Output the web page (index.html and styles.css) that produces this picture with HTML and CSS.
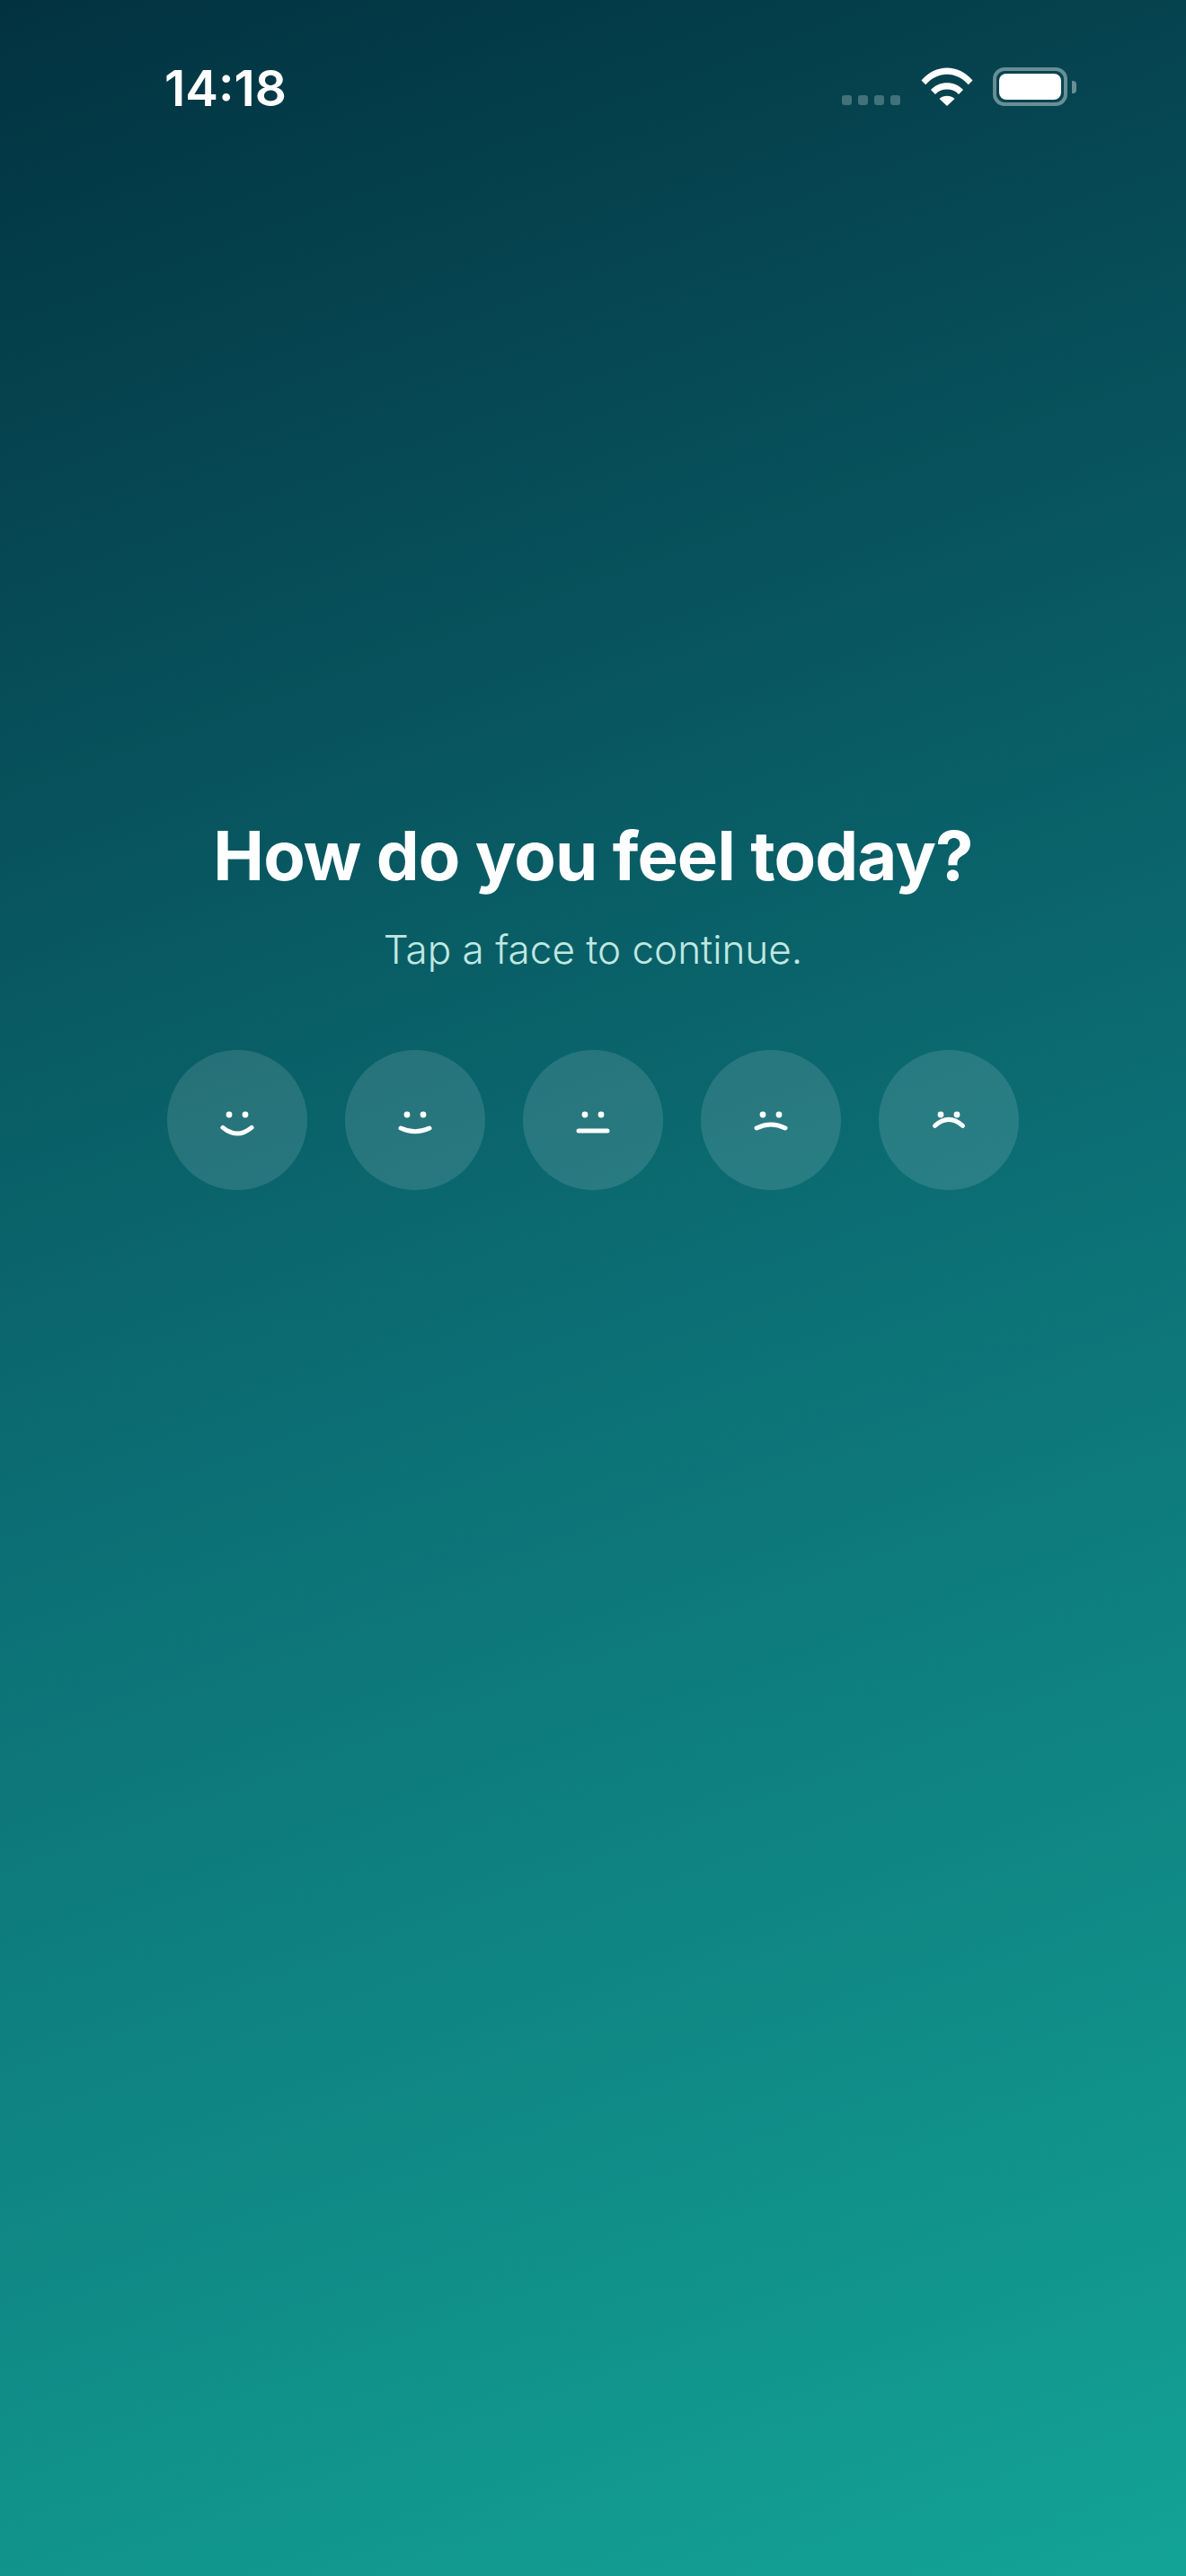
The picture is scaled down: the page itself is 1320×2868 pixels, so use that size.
FILE: index.html
```html
<!DOCTYPE html>
<html lang="en">
<head>
    <meta charset="UTF-8">
    <meta name="viewport" content="width=device-width, initial-scale=1.0">
    <title>How do you feel today?</title>
    <link rel="stylesheet" href="styles.css">
</head>
<body>
    <div class="screen">
        <!-- Status bar -->
        <header class="status-bar">
            <span class="clock">14:18</span>
            <div class="status-icons">
                <div class="signal">
                    <span class="signal-dot"></span>
                    <span class="signal-dot"></span>
                    <span class="signal-dot"></span>
                    <span class="signal-dot"></span>
                </div>
                <svg class="wifi" width="58" height="44" viewBox="0 0 58 44">
                    <path fill="#fff" d="M0.5 14.5 C16 -4.3 42 -4.3 57.5 14.5 L52.8 19.3 C39.5 3.8 18.5 3.8 5.2 19.3 Z"/>
                    <path fill="#fff" d="M11 25 C20 14.6 38 14.6 47 25 L42 30 C35.5 22.8 22.5 22.8 16 30 Z"/>
                    <path fill="#fff" d="M20.5 35 C25.5 30.6 32.5 30.6 37.5 35 L29 43 Z"/>
                </svg>
                <div class="battery">
                    <div class="battery-body"><div class="battery-level"></div></div>
                    <div class="battery-nub"></div>
                </div>
            </div>
        </header>

        <main class="prompt">
            <h1 class="prompt-title">How do you feel today?</h1>
            <p class="prompt-sub">Tap a face to continue.</p>

            <div class="faces">
                <button class="face" type="button" aria-label="Great">
                    <svg width="156" height="156" viewBox="0 0 156 156">
                        <circle class="eye" cx="69" cy="72" r="3.4"/>
                        <circle class="eye" cx="87" cy="72" r="3.4"/>
                        <path class="mouth" d="M62 86.3 Q78 99.7 94 86.3"/>
                    </svg>
                </button>
                <button class="face" type="button" aria-label="Good">
                    <svg width="156" height="156" viewBox="0 0 156 156">
                        <circle class="eye" cx="69" cy="72" r="3.4"/>
                        <circle class="eye" cx="87" cy="72" r="3.4"/>
                        <path class="mouth" d="M62 87 Q78 94.4 94 87"/>
                    </svg>
                </button>
                <button class="face" type="button" aria-label="Okay">
                    <svg width="156" height="156" viewBox="0 0 156 156">
                        <circle class="eye" cx="69" cy="72" r="3.4"/>
                        <circle class="eye" cx="87" cy="72" r="3.4"/>
                        <path class="mouth" d="M62 90 L94 90"/>
                    </svg>
                </button>
                <button class="face" type="button" aria-label="Bad">
                    <svg width="156" height="156" viewBox="0 0 156 156">
                        <circle class="eye" cx="69" cy="72" r="3.4"/>
                        <circle class="eye" cx="87" cy="72" r="3.4"/>
                        <path class="mouth" d="M62 87 Q78 79 94 87"/>
                    </svg>
                </button>
                <button class="face" type="button" aria-label="Awful">
                    <svg width="156" height="156" viewBox="0 0 156 156">
                        <circle class="eye" cx="69" cy="72" r="3.4"/>
                        <circle class="eye" cx="87" cy="72" r="3.4"/>
                        <path class="mouth" d="M62.5 84.3 Q78 70.3 93.5 84.3"/>
                    </svg>
                </button>
            </div>
        </main>
    </div>
</body>
</html>
```

FILE: styles.css
```css
* {
    box-sizing: border-box;
}

body {
    margin: 0;
    font-family: Inter, "Noto Sans", sans-serif;
}

.screen {
    height: 2868px;
    overflow: hidden;
    background: linear-gradient(160deg, #023240 0%, #0c6f75 52%, #13a396 100%);
    color: #ffffff;
}

.status-bar {
    display: flex;
    justify-content: space-between;
    align-items: flex-start;
    height: 120px;
    padding: 65px 122px 0 183px;
}

.clock {
    font-size: 55px;
    font-weight: 600;
    line-height: 66px;
}

.status-icons {
    display: flex;
    align-items: flex-start;
    padding-top: 10px;
}

.signal {
    display: flex;
    gap: 7px;
    margin-top: 31px;
    margin-right: 23px;
}

.signal-dot {
    width: 11px;
    height: 11px;
    border-radius: 3px;
    background-color: rgba(255, 255, 255, 0.25);
}

.wifi {
    display: block;
    margin-right: 22px;
}

.battery {
    display: flex;
    align-items: center;
}

.battery-body {
    width: 83px;
    height: 43px;
    padding: 3px;
    border: 4px solid rgba(255, 255, 255, 0.4);
    border-radius: 13px;
}

.battery-level {
    height: 100%;
    background-color: #ffffff;
    border-radius: 8px;
}

.battery-nub {
    width: 5px;
    height: 14px;
    margin-left: 5px;
    background-color: rgba(255, 255, 255, 0.4);
    border-radius: 0 4px 4px 0;
}

.prompt {
    display: flex;
    flex-direction: column;
    align-items: center;
    padding-top: 786px;
}

.prompt-title {
    margin: 0;
    font-size: 76px;
    font-weight: 700;
    line-height: 92px;
    letter-spacing: -0.85px;
}

.prompt-sub {
    margin: 31px 0 0;
    font-size: 44px;
    font-weight: 350;
    line-height: 56px;
    color: #c0e8e1;
}

.faces {
    display: flex;
    gap: 42px;
    margin-top: 84px;
}

.face {
    width: 156px;
    height: 156px;
    padding: 0;
    border: none;
    border-radius: 50%;
    background-color: rgba(255, 255, 255, 0.12);
    cursor: pointer;
}

.face svg {
    display: block;
}

.eye {
    fill: #ffffff;
}

.mouth {
    fill: none;
    stroke: #ffffff;
    stroke-width: 5;
    stroke-linecap: round;
}
```
